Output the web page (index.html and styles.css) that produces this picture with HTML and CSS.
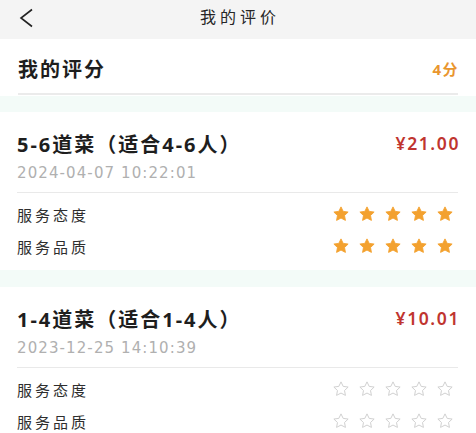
FILE: index.html
```html
<!DOCTYPE html>
<html lang="zh-CN">
<head>
<meta charset="utf-8">
<title>我的评价</title>
<link rel="stylesheet" href="styles.css">
</head>
<body>
<div class="page">
  <header class="topbar">
    <svg class="back" viewBox="0 0 16 20" width="16" height="20"><polyline points="13,1.5 2,10 13,18.5" fill="none" stroke="#222" stroke-width="1.6" stroke-linejoin="miter"/></svg>
    <div class="topbar-title">我的评价</div>
  </header>

  <section class="score">
    <div class="score-row">
      <span class="score-label">我的评分</span>
      <span class="score-value">4分</span>
    </div>
    <div class="score-line"></div>
  </section>

  <div class="gap"></div>

  <section class="card">
    <div class="card-head">
      <span class="card-title">5-6道菜（适合4-6人）</span>
      <span class="price">¥21.00</span>
    </div>
    <div class="date">2024-04-07 10:22:01</div>
    <div class="divider"></div>
    <div class="rate-row">
      <span class="rate-label">服务态度</span>
      <span class="stars full">
        <svg viewBox="0 0 24 24"><path d="M12 2.5l2.9 6 6.6.9-4.8 4.6 1.2 6.5L12 17.4l-5.9 3.1 1.2-6.5-4.8-4.6 6.6-.9z"/></svg>
        <svg viewBox="0 0 24 24"><path d="M12 2.5l2.9 6 6.6.9-4.8 4.6 1.2 6.5L12 17.4l-5.9 3.1 1.2-6.5-4.8-4.6 6.6-.9z"/></svg>
        <svg viewBox="0 0 24 24"><path d="M12 2.5l2.9 6 6.6.9-4.8 4.6 1.2 6.5L12 17.4l-5.9 3.1 1.2-6.5-4.8-4.6 6.6-.9z"/></svg>
        <svg viewBox="0 0 24 24"><path d="M12 2.5l2.9 6 6.6.9-4.8 4.6 1.2 6.5L12 17.4l-5.9 3.1 1.2-6.5-4.8-4.6 6.6-.9z"/></svg>
        <svg viewBox="0 0 24 24"><path d="M12 2.5l2.9 6 6.6.9-4.8 4.6 1.2 6.5L12 17.4l-5.9 3.1 1.2-6.5-4.8-4.6 6.6-.9z"/></svg>
      </span>
    </div>
    <div class="rate-row">
      <span class="rate-label">服务品质</span>
      <span class="stars full">
        <svg viewBox="0 0 24 24"><path d="M12 2.5l2.9 6 6.6.9-4.8 4.6 1.2 6.5L12 17.4l-5.9 3.1 1.2-6.5-4.8-4.6 6.6-.9z"/></svg>
        <svg viewBox="0 0 24 24"><path d="M12 2.5l2.9 6 6.6.9-4.8 4.6 1.2 6.5L12 17.4l-5.9 3.1 1.2-6.5-4.8-4.6 6.6-.9z"/></svg>
        <svg viewBox="0 0 24 24"><path d="M12 2.5l2.9 6 6.6.9-4.8 4.6 1.2 6.5L12 17.4l-5.9 3.1 1.2-6.5-4.8-4.6 6.6-.9z"/></svg>
        <svg viewBox="0 0 24 24"><path d="M12 2.5l2.9 6 6.6.9-4.8 4.6 1.2 6.5L12 17.4l-5.9 3.1 1.2-6.5-4.8-4.6 6.6-.9z"/></svg>
        <svg viewBox="0 0 24 24"><path d="M12 2.5l2.9 6 6.6.9-4.8 4.6 1.2 6.5L12 17.4l-5.9 3.1 1.2-6.5-4.8-4.6 6.6-.9z"/></svg>
      </span>
    </div>
  </section>

  <div class="gap"></div>

  <section class="card">
    <div class="card-head">
      <span class="card-title">1-4道菜（适合1-4人）</span>
      <span class="price">¥10.01</span>
    </div>
    <div class="date">2023-12-25 14:10:39</div>
    <div class="divider"></div>
    <div class="rate-row">
      <span class="rate-label">服务态度</span>
      <span class="stars empty">
        <svg viewBox="0 0 24 24"><path d="M12 2.5l2.9 6 6.6.9-4.8 4.6 1.2 6.5L12 17.4l-5.9 3.1 1.2-6.5-4.8-4.6 6.6-.9z"/></svg>
        <svg viewBox="0 0 24 24"><path d="M12 2.5l2.9 6 6.6.9-4.8 4.6 1.2 6.5L12 17.4l-5.9 3.1 1.2-6.5-4.8-4.6 6.6-.9z"/></svg>
        <svg viewBox="0 0 24 24"><path d="M12 2.5l2.9 6 6.6.9-4.8 4.6 1.2 6.5L12 17.4l-5.9 3.1 1.2-6.5-4.8-4.6 6.6-.9z"/></svg>
        <svg viewBox="0 0 24 24"><path d="M12 2.5l2.9 6 6.6.9-4.8 4.6 1.2 6.5L12 17.4l-5.9 3.1 1.2-6.5-4.8-4.6 6.6-.9z"/></svg>
        <svg viewBox="0 0 24 24"><path d="M12 2.5l2.9 6 6.6.9-4.8 4.6 1.2 6.5L12 17.4l-5.9 3.1 1.2-6.5-4.8-4.6 6.6-.9z"/></svg>
      </span>
    </div>
    <div class="rate-row">
      <span class="rate-label">服务品质</span>
      <span class="stars empty">
        <svg viewBox="0 0 24 24"><path d="M12 2.5l2.9 6 6.6.9-4.8 4.6 1.2 6.5L12 17.4l-5.9 3.1 1.2-6.5-4.8-4.6 6.6-.9z"/></svg>
        <svg viewBox="0 0 24 24"><path d="M12 2.5l2.9 6 6.6.9-4.8 4.6 1.2 6.5L12 17.4l-5.9 3.1 1.2-6.5-4.8-4.6 6.6-.9z"/></svg>
        <svg viewBox="0 0 24 24"><path d="M12 2.5l2.9 6 6.6.9-4.8 4.6 1.2 6.5L12 17.4l-5.9 3.1 1.2-6.5-4.8-4.6 6.6-.9z"/></svg>
        <svg viewBox="0 0 24 24"><path d="M12 2.5l2.9 6 6.6.9-4.8 4.6 1.2 6.5L12 17.4l-5.9 3.1 1.2-6.5-4.8-4.6 6.6-.9z"/></svg>
        <svg viewBox="0 0 24 24"><path d="M12 2.5l2.9 6 6.6.9-4.8 4.6 1.2 6.5L12 17.4l-5.9 3.1 1.2-6.5-4.8-4.6 6.6-.9z"/></svg>
      </span>
    </div>
  </section>
</div>
</body>
</html>
```

FILE: styles.css
```css
* { box-sizing: border-box; }
html, body {
  margin: 0;
  padding: 0;
  background: #f3fbf8;
  font-family: "Noto Sans", "Noto Sans CJK SC", sans-serif;
  color: #222;
}
.page {
  width: 476px;
  height: 433px;
  overflow: hidden;
}
.topbar {
  height: 39px;
  background: #f4f4f4;
  display: flex;
  align-items: center;
  position: relative;
  padding-left: 19px;
}
.back {
  display: block;
  width: 16px;
  height: 20px;
  margin-top: -4px;
}
.topbar-title {
  position: absolute;
  left: 0;
  right: 0;
  top: 5px;
  text-align: center;
  font-family: "Noto Sans CJK SC", serif;
  font-weight: 400;
  font-size: 16px;
  letter-spacing: 4px;
  line-height: 22px;
  color: #262626;
  padding-left: 4px;
}
.score {
  background: #fff;
  padding: 16px 18px 1px;
}
.score-row {
  display: flex;
  justify-content: space-between;
  align-items: center;
  height: 26px;
}
.score-label {
  font-family: "Noto Sans CJK SC", sans-serif;
  font-weight: 700;
  font-size: 20px;
  letter-spacing: 2px;
  color: #1e1e1e;
}
.score-value {
  font-family: "Noto Sans", "Noto Sans CJK SC", sans-serif;
  font-weight: 700;
  font-size: 15px;
  letter-spacing: 1.5px;
  color: #e9962e;
  margin-right: -1px;
}
.score-line {
  height: 2px;
  background: #ebebeb;
  margin-top: 12px;
}
.gap {
  height: 16px;
  background: #f3fbf8;
}
.card {
  background: #fff;
  padding: 18px 18px 8px;
}
.card + .gap { height: 17px; }
.card-head {
  display: flex;
  justify-content: space-between;
  align-items: center;
  height: 26px;
}
.card-title {
  font-family: "Noto Sans", "Noto Sans CJK SC", sans-serif;
  font-weight: 700;
  font-size: 20px;
  letter-spacing: 2px;
  color: #1e1e1e;
  margin-left: -1px;
}
.price {
  font-family: "Noto Sans", sans-serif;
  font-weight: 600;
  font-size: 17.5px;
  letter-spacing: 1.6px;
  color: #c0352f;
  margin-right: -2px;
}
.date {
  margin-top: 7px;
  height: 20px;
  line-height: 20px;
  font-family: "DejaVu Sans", sans-serif;
  font-size: 15px;
  letter-spacing: 1.1px;
  color: #b0b0b0;
  margin-left: -1px;
}
.divider {
  height: 1px;
  background: #e9e9e9;
  margin-top: 9px;
  margin-left: -1px;
}
.rate-row {
  display: flex;
  justify-content: space-between;
  align-items: center;
  height: 32px;
}
.divider + .rate-row { margin-top: 5px; }
.rate-label {
  font-family: "Noto Sans CJK SC", sans-serif;
  font-size: 15px;
  letter-spacing: 3px;
  color: #2e2e2e;
  margin-left: -1px;
}
.stars {
  display: flex;
  gap: 8px;
  margin-right: 4px;
}
.stars svg {
  display: block;
  width: 18px;
  height: 18px;
}
.stars.full path {
  fill: #f3a12f;
  stroke: #f3a12f;
  stroke-width: 1.2;
  stroke-linejoin: round;
}
.stars.empty path {
  fill: none;
  stroke: #cfcfcf;
  stroke-width: 1.3;
  stroke-linejoin: round;
}
```
